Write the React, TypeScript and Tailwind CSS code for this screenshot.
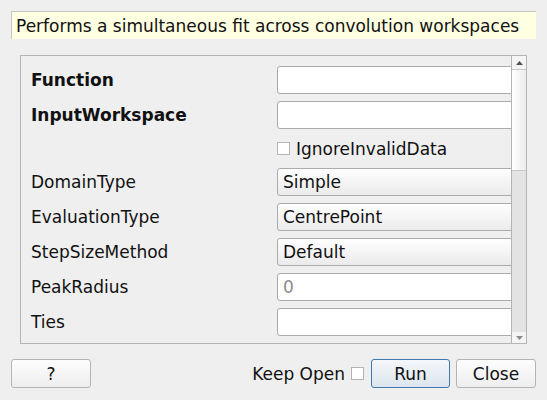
const rows: { label: string; bold?: boolean; kind: "text" | "combo" | "check"; value?: string; placeholder?: boolean }[] = [
  { label: "Function", bold: true, kind: "text" },
  { label: "InputWorkspace", bold: true, kind: "text" },
  { label: "IgnoreInvalidData", kind: "check" },
  { label: "DomainType", kind: "combo", value: "Simple" },
  { label: "EvaluationType", kind: "combo", value: "CentrePoint" },
  { label: "StepSizeMethod", kind: "combo", value: "Default" },
  { label: "PeakRadius", kind: "text", value: "0", placeholder: true },
  { label: "Ties", kind: "text" },
  // next row is scrolled out of view, only its box edge peeks in
  { label: "", kind: "text" },
]

function Row({ row }: { row: (typeof rows)[number] }) {
  if (row.kind === "check") {
    return (
      <div className="flex h-[25px] shrink-0 items-center">
        <div className="w-[256px] shrink-0" />
        <div className="flex items-center gap-[6px]">
          <div className="h-[13px] w-[13px] border border-[#b4b4b4] bg-white" />
          <span>{row.label}</span>
        </div>
      </div>
    )
  }
  const box =
    row.kind === "combo"
      ? "bg-gradient-to-b from-[#fefefe] to-[#ebebeb]"
      : "bg-white"
  return (
    <div className="flex h-[28px] shrink-0 items-center">
      <div className={`w-[256px] shrink-0 pl-[10px] ${row.bold ? "font-bold" : ""}`}>
        {row.label}
      </div>
      <div
        className={`flex h-[28px] w-[260px] shrink-0 items-center rounded-[3px] border border-[#ababab] pl-[5px] ${box} ${
          row.placeholder ? "text-[#8c8c8c]" : ""
        }`}
      >
        {row.value}
      </div>
    </div>
  )
}

export default function App() {
  return (
    <div
      className="flex h-[400px] w-[547px] flex-col bg-[#efefef] text-[17px] leading-[20px] text-[#111]"
      style={{ fontFamily: '"DejaVu Sans", "Liberation Sans", sans-serif' }}
    >
      {/* Description */}
      <div className="mx-[11px] mt-[11px] flex h-[28px] shrink-0 items-center border-l border-t border-[#c4c4c4] bg-[#ffffe1] pl-[4px]">
        Performs a simultaneous fit across convolution workspaces
      </div>

      {/* Property panel */}
      <div className="ml-[20px] mt-[16px] flex h-[289px] w-[507px] shrink-0 border border-[#b4b4b4]">
        <div className="flex flex-1 flex-col gap-[7px] overflow-hidden pt-[10px]">
          {rows.map((r, i) => (
            <Row key={i} row={r} />
          ))}
        </div>

        {/* Scrollbar */}
        <div className="flex w-[15px] flex-col border-l border-[#b4b4b4]">
          <div className="flex h-[14px] items-center justify-center border-b border-[#c8c8c8] bg-[#f4f4f4]">
            <svg width="7" height="4" viewBox="0 0 7 4">
              <path d="M0 4 L3.5 0 L7 4 Z" fill="#505050" />
            </svg>
          </div>
          <div className="h-[101px] border-b border-[#c8c8c8] bg-gradient-to-r from-white to-[#ececec]" />
          <div className="flex-1 bg-[#e3e3e3]" />
          <div className="flex h-[11px] items-center justify-center bg-[#f4f4f4]">
            <svg width="7" height="4" viewBox="0 0 7 4">
              <path d="M0 0 L3.5 4 L7 0 Z" fill="#8a8a8a" />
            </svg>
          </div>
        </div>
      </div>

      {/* Buttons */}
      <div className="mx-[11px] mt-[15px] flex h-[29px] items-center">
        <button className="h-[29px] w-[80px] rounded-[3px] border border-[#b4b4b4] bg-gradient-to-b from-[#fdfdfd] to-[#eeeeee]">
          ?
        </button>
        <div className="ml-auto flex items-center">
          <span>Keep Open</span>
          <div className="ml-[6px] h-[13px] w-[13px] border border-[#b4b4b4] bg-white" />
          <button className="ml-[7px] h-[29px] w-[79px] rounded-[3px] border border-[#3d79b0] bg-gradient-to-b from-[#f4f7fa] to-[#dce5ee]">
            Run
          </button>
          <button className="ml-[6px] h-[29px] w-[80px] rounded-[3px] border border-[#b4b4b4] bg-gradient-to-b from-[#fdfdfd] to-[#eeeeee]">
            Close
          </button>
        </div>
      </div>
    </div>
  )
}
